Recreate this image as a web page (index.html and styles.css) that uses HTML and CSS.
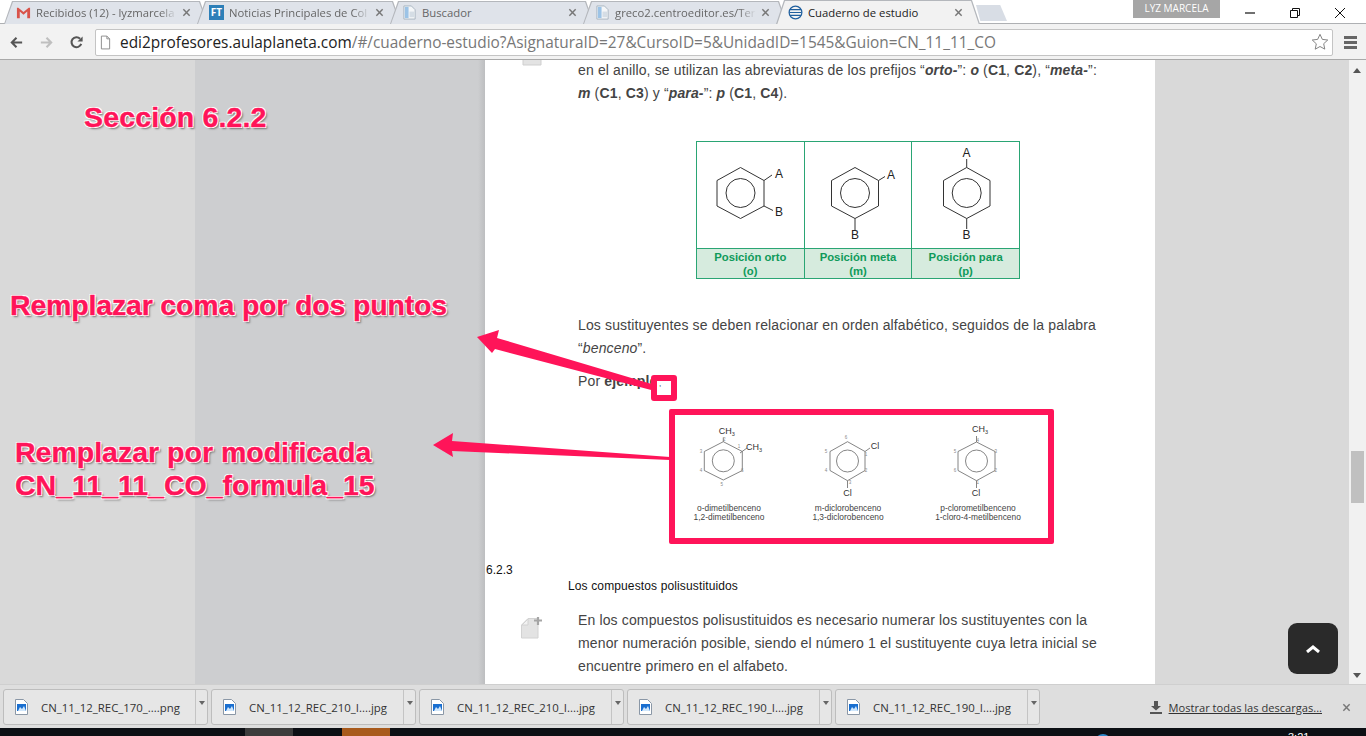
FILE: index.html
```html
<!DOCTYPE html>
<html lang="es">
<head>
  <meta charset="UTF-8" />
  <title>Cuaderno de estudio</title>
  <link rel="stylesheet" href="styles.css">
</head>
<body>
  <svg class="defs" width="0" height="0">
    <symbol id="page-ico" viewBox="0 0 16 16">
      <path d="M2 1h8l4 4v10H2z" fill="#f4f6f8" stroke="#a9b4c0"/>
      <path d="M3 2h4v12H3z" fill="#9cc3e6"/>
      <path d="M8 7h5v6H8z" fill="#d5dde5"/>
    </symbol>
    <symbol id="file-ico" viewBox="0 0 13 16">
      <path d="M.5 .5h8l4 4v11H.5z" fill="#fff" stroke="#8a97a6"/>
      <path d="M2 5h9v7H2z" fill="#1a6fd0"/>
      <path d="M3 12l2-4 2 2 2-3 2 5z" fill="#cfe6fb"/>
    </symbol>
    <symbol id="x-ico" viewBox="0 0 10 10">
      <path d="M1.500 1.500l7 7M8.500 1.500l-7 7" stroke="#777" stroke-width="1.600" fill="none"/>
    </symbol>
    <symbol id="caret" viewBox="0 0 6 4">
      <path d="M0 0h6L3 4z" fill="#666"/>
    </symbol>
  </svg>

  <header class="tabstrip">
    <div class="tab">
      <svg class="tab-ico" viewBox="0 0 16 16"><path d="M1 3v11h3V7l4 3.500L12 7v7h3V3h-1.500L8 7.500 2.500 3z" fill="#d9534a"/></svg>
      <span class="tab-title tab-fade">Recibidos (12) - lyzmarcela</span>
      <svg class="tab-x"><use href="#x-ico"/></svg>
    </div>
    <div class="tab">
      <span class="ft-ico">FT</span>
      <span class="tab-title tab-fade">Noticias Principales de Col</span>
      <svg class="tab-x"><use href="#x-ico"/></svg>
    </div>
    <div class="tab">
      <svg class="tab-ico"><use href="#page-ico"/></svg>
      <span class="tab-title">Buscador</span>
      <svg class="tab-x"><use href="#x-ico"/></svg>
    </div>
    <div class="tab">
      <svg class="tab-ico"><use href="#page-ico"/></svg>
      <span class="tab-title tab-fade">greco2.centroeditor.es/Ter</span>
      <svg class="tab-x"><use href="#x-ico"/></svg>
    </div>
    <div class="tab tab-active">
      <svg class="tab-ico" viewBox="0 0 16 16"><g fill="none" stroke="#1f5f9e" stroke-width="1.300"><circle cx="8" cy="8" r="6.800"/><path d="M2 5h12M1.500 8h13M2 11h12"/></g></svg>
      <span class="tab-title">Cuaderno de estudio</span>
      <svg class="tab-x"><use href="#x-ico"/></svg>
    </div>
    <div class="tab-new"></div>
    <div class="profile">LYZ MARCELA</div>
    <div class="win-btns">
      <svg class="win-btn" viewBox="0 0 12 12"><path d="M1 6h10" stroke="#111" stroke-width="1.200"/></svg>
      <svg class="win-btn" viewBox="0 0 12 12"><path d="M1.500 3.500h7v7h-7zM3.500 3.500v-2h7v7h-2" fill="none" stroke="#111"/></svg>
      <svg class="win-btn" viewBox="0 0 12 12"><path d="M1 1l10 10M11 1L1 11" stroke="#111"/></svg>
    </div>
  </header>

  <nav class="toolbar">
    <div class="nav-btns">
      <svg class="nav-ico" viewBox="0 0 16 16"><path d="M14 8H4M8 3L3 8l5 5" fill="none" stroke="#555" stroke-width="2.200"/></svg>
      <svg class="nav-ico" viewBox="0 0 16 16"><path d="M2 8h10M8 3l5 5-5 5" fill="none" stroke="#bfbfbf" stroke-width="2.200"/></svg>
      <svg class="nav-ico" viewBox="0 0 16 16"><path d="M13 9.500A5.300 5.300 0 1 1 11.800 4" fill="none" stroke="#555" stroke-width="2.200"/><path d="M14.500 1.500v5.500H9z" fill="#555"/></svg>
    </div>
    <div class="omnibox">
      <svg class="omni-ico" viewBox="0 0 12 16"><path d="M1.500 1h6l3 3v11h-9z" fill="#fff" stroke="#888"/><path d="M7.500 1v3h3" fill="none" stroke="#888"/></svg>
      <span class="url"><b>edi2profesores.aulaplaneta.com</b>/#/cuaderno-estudio?AsignaturaID=27&amp;CursoID=5&amp;UnidadID=1545&amp;Guion=CN_11_11_CO</span>
      <svg class="star" viewBox="0 0 20 20"><path d="M10 1.500l2.600 5.600 6 .7-4.500 4.100 1.200 6L10 15l-5.300 3 1.200-6L1.400 7.800l6-.7z" fill="#fff" stroke="#777"/></svg>
    </div>
    <div class="menu-ico"><i></i><i></i><i></i></div>
  </nav>

  <main class="viewport">
    <div class="side-left"></div>

    <article class="sheet">
      <svg class="note-ico note-top" viewBox="0 0 20 22"><path d="M1 7l6-6h12v20H1z" fill="#e3e3e3" stroke="#cfcfcf"/></svg>
      <p class="body-text">en el anillo, se utilizan las abreviaturas de los prefijos “<b><i>orto-</i></b>”: <b><i>o</i></b> (<b>C1</b>, <b>C2</b>), “<b><i>meta-</i></b>”:<br><b><i>m</i></b> (<b>C1</b>, <b>C3</b>) y “<b><i>para-</i></b>”: <b><i>p</i></b> (<b>C1</b>, <b>C4</b>).</p>

      <table class="pos-table">
        <tr>
          <td>
            <svg class="mol" viewBox="0 0 106 106" width="106" height="106">
              <path d="M43.500 25.500L67 38.500V64L43.500 76.500 20 64V38.500z"/><circle cx="43.500" cy="51" r="14.500"/>
              <path d="M67 38.500L75 33M67 64l9 4.500"/>
              <text x="82" y="35.500">A</text><text x="82" y="73.500">B</text>
            </svg>
          </td>
          <td>
            <svg class="mol" viewBox="0 0 106 106" width="106" height="106">
              <path d="M50 25.500L73.500 38.500V64L50 76.500 26.500 64V38.500z"/><circle cx="50" cy="51" r="14.500"/>
              <path d="M73.500 38.500L80 34.500M50 76.500V88"/>
              <text x="86" y="37">A</text><text x="50" y="97">B</text>
            </svg>
          </td>
          <td>
            <svg class="mol" viewBox="0 0 106 106" width="106" height="106">
              <path d="M54.700 25.500L78 38.500V64L54.700 76.500 31.500 64V38.500z"/><circle cx="54.700" cy="51" r="14.500"/>
              <path d="M54.700 25.500V17M54.700 76.500V87"/>
              <text x="54.500" y="15">A</text><text x="54.500" y="97">B</text>
            </svg>
          </td>
        </tr>
        <tr class="pos-labels">
          <td>Posición orto<br>(o)</td>
          <td>Posición meta<br>(m)</td>
          <td>Posición para<br>(p)</td>
        </tr>
      </table>

      <p class="body-text after-table">Los sustituyentes se deben relacionar en orden alfabético, seguidos de la palabra<br>“<i>benceno</i>”.</p>
      <p class="body-text por-ej">Por <b>ejemplo</b></p>

      <div class="formula-box">
        <figure class="formula">
          <svg class="mol-sm" viewBox="0 0 108 85" width="108" height="85">
            <path d="M48.300 26.700L67.300 36.500V55.500L48.300 65 29.300 55.500V36.500z"/><circle cx="48.300" cy="45.800" r="11"/>
            <path d="M48.300 26.700V22.500M65 38l7-5"/>
            <text x="51.700" y="19">CH<tspan class="sub" dy="2">3</tspan></text>
            <text x="79" y="34.700">CH<tspan class="sub" dy="2">3</tspan></text>
            <g class="num"><text x="49.300" y="25.800">2</text><text x="64" y="33">1</text><text x="26" y="37.500">3</text><text x="26" y="57">4</text><text x="46.700" y="70.800">5</text><text x="67.300" y="57">6</text></g>
          </svg>
          <figcaption>o-dimetilbenceno<br>1,2-dimetilbenceno</figcaption>
        </figure>
        <figure class="formula">
          <svg class="mol-sm" viewBox="0 0 130 85" width="130" height="85">
            <path d="M64.500 26.700L82 36.500V55.500L64.500 65.700 47 55.500V36.500z"/><circle cx="64.500" cy="46" r="11"/>
            <path d="M82 36.500L87 33M64.500 65.700V73"/>
            <text x="92" y="33.700">Cl</text><text x="64.500" y="80.700">Cl</text>
            <g class="num"><text x="63" y="24.200">6</text><text x="83" y="40.800">1</text><text x="83" y="57.200">2</text><text x="67" y="68.800">3</text><text x="43" y="57.200">4</text><text x="43" y="38.200">5</text></g>
          </svg>
          <figcaption>m-diclorobenceno<br>1,3-diclorobenceno</figcaption>
        </figure>
        <figure class="formula">
          <svg class="mol-sm" viewBox="0 0 130 85" width="130" height="85">
            <path d="M63.500 27L82 36.500V55.500L63.500 65.700 45 55.500V36.500z"/><circle cx="63.500" cy="46" r="11"/>
            <path d="M63.500 27V21M63.500 65.700V73"/>
            <text x="67" y="17">CH<tspan class="sub" dy="2">3</tspan></text>
            <text x="63" y="80.700">Cl</text>
            <g class="num"><text x="64.700" y="26.500">4</text><text x="82.700" y="37.500">3</text><text x="82.700" y="57.200">2</text><text x="64.700" y="68.800">1</text><text x="42" y="57.200">6</text><text x="42" y="37.500">5</text></g>
          </svg>
          <figcaption>p-clorometilbenceno<br>1-cloro-4-metilbenceno</figcaption>
        </figure>
      </div>

      <div class="sec-num">6.2.3</div>
      <div class="sec-title">Los compuestos polisustituidos</div>

      <div class="note-row">
        <svg class="note-ico" viewBox="0 0 22 22">
          <path d="M.5 8l6.500-6.500h10V21H.5z" fill="#e3e3e3" stroke="#d2d2d2"/>
          <path d="M1 8l6-6v6z" fill="#f2f2f2" stroke="#d2d2d2"/>
          <path d="M13 3.500h8M17 0v8" stroke="#a5a5a5" stroke-width="2.200"/>
        </svg>
        <p class="body-text">En los compuestos polisustituidos es necesario numerar los sustituyentes con la<br>menor numeración posible, siendo el número 1 el sustituyente cuya letra inicial se<br>encuentre primero en el alfabeto.</p>
      </div>
    </article>

    <div class="side-right">
      <button class="to-top"><svg viewBox="0 0 14 8" width="14" height="8"><path d="M1 7l6-5 6 5" fill="none" stroke="#fff" stroke-width="3"/></svg></button>
    </div>
    <div class="scrollbar">
      <div class="scroll-up"></div>
      <div class="scroll-thumb"></div>
      <div class="scroll-down"></div>
    </div>

    <!-- annotations drawn on top of the screenshot -->
    <div class="note note-a">Sección 6.2.2</div>
    <div class="note note-b">Remplazar coma por dos puntos</div>
    <div class="note note-c">Remplazar por modificada<br>CN_11_11_CO_formula_15</div>
    <svg class="arrows" viewBox="0 0 1366 624" width="1366" height="624">
      <path d="M477 277L499 270 497 278 655 325V331L495 289 492 293z"/>
      <path d="M433 385L453 373 452 381 670 397V400L452 391 453 397z"/>
    </svg>
    <div class="comma-mark">,</div>
  </main>

  <footer class="shelf">
    <div class="dl-item"><svg class="dl-ico"><use href="#file-ico"/></svg><span class="dl-name">CN_11_12_REC_170_....png</span><span class="dl-arrow"><svg width="6" height="4"><use href="#caret"/></svg></span></div>
    <div class="dl-item"><svg class="dl-ico"><use href="#file-ico"/></svg><span class="dl-name">CN_11_12_REC_210_I....jpg</span><span class="dl-arrow"><svg width="6" height="4"><use href="#caret"/></svg></span></div>
    <div class="dl-item"><svg class="dl-ico"><use href="#file-ico"/></svg><span class="dl-name">CN_11_12_REC_210_I....jpg</span><span class="dl-arrow"><svg width="6" height="4"><use href="#caret"/></svg></span></div>
    <div class="dl-item"><svg class="dl-ico"><use href="#file-ico"/></svg><span class="dl-name">CN_11_12_REC_190_I....jpg</span><span class="dl-arrow"><svg width="6" height="4"><use href="#caret"/></svg></span></div>
    <div class="dl-item"><svg class="dl-ico"><use href="#file-ico"/></svg><span class="dl-name">CN_11_12_REC_190_I....jpg</span><span class="dl-arrow"><svg width="6" height="4"><use href="#caret"/></svg></span></div>
    <div class="show-all">
      <svg width="14" height="14" viewBox="0 0 14 14"><path d="M5 1h4v5h3L7 10.500 2 6h3zM1 12h12v2H1z" fill="#555"/></svg>
      <a class="show-link">Mostrar todas las descargas...</a>
      <svg class="shelf-x"><use href="#x-ico"/></svg>
    </div>
  </footer>

  <div class="taskbar">
    <i class="task-gray"></i><i class="task-orange"></i><i class="task-blue"></i>
    <span class="task-time">3:21</span>
  </div>
</body>
</html>
```

FILE: styles.css
```css
* { margin: 0; padding: 0; box-sizing: border-box; }
html, body {
  width: 1366px; height: 736px;
  overflow: hidden;
  font-family: 'Liberation Sans', Arial, sans-serif;
  background: #0c0f14;
}
body { display: flex; flex-direction: column; }
.defs { position: absolute; }

/* browser chrome */
.tabstrip {
  height: 24px;
  flex: none;
  display: flex;
  align-items: flex-end;
  padding-left: 4px;
  background: #fff;
  font-family: 'Open Sans', sans-serif;
  box-shadow: inset 0 -1px 0 #aeb0b3;
}
.tab {
  position: relative;
  isolation: isolate;
  width: 204px;
  height: 23px;
  flex: none;
  display: flex;
  align-items: center;
  gap: 5px;
  padding: 0 17px 0 12px;
  margin-right: -11px;
  font-size: 11.3px;
  color: #666;
}
.tab::before, .tab::after {
  content: "";
  position: absolute;
  z-index: -1;
  clip-path: polygon(0 100%, 8px 0, calc(100% - 8px) 0, 100% 100%);
}
.tab::before { inset: 0; background: #b4b7bc; }
.tab::after { inset: 1px 1px 0 1px; background: #dfe3ea; }
.tab-active { color: #222; height: 24px; z-index: 2; }
.tab-active::after { background: #f2f2f2; inset: 1px 1px -1px 1px; }
.tab-ico { width: 15px; height: 15px; flex: none; }
.ft-ico {
  width: 15px; height: 15px; flex: none;
  background: #2d7fb8;
  color: #fff;
  font-size: 10px;
  font-weight: bold;
  text-align: center;
  line-height: 15px;
}
.tab-title { flex: 1; white-space: nowrap; }
.tab-fade { -webkit-mask-image: linear-gradient(90deg, #000 88%, transparent 100%); mask-image: linear-gradient(90deg, #000 88%, transparent 100%); }
.tab-x { width: 9px; height: 9px; flex: none; }
.tab-new {
  width: 31px; height: 16px;
  margin: 0 0 3px 7px;
  background: #d8dde5;
  clip-path: polygon(0 0, 78% 0, 100% 100%, 14% 100%);
}
.profile {
  align-self: flex-start;
  width: 87px; height: 18px;
  margin-left: 126px;
  background: #a6a6a6;
  color: #fff;
  font-size: 10px;
  line-height: 17px;
  text-align: center;
}
.win-btns { align-self: flex-start; display: flex; gap: 33px; padding: 7px 0 0 24px; }
.win-btn { width: 12px; height: 12px; }

.toolbar {
  height: 36px;
  flex: none;
  display: flex;
  align-items: center;
  gap: 11px;
  padding: 1px 0 0 9px;
  background: #f2f2f2;
  border-bottom: 1px solid #a9a9a9;
}
.nav-btns { display: flex; gap: 15px; }
.nav-ico { width: 15px; height: 15px; flex: none; }
.omnibox {
  width: 1238px;
  height: 27px;
  display: flex;
  align-items: center;
  gap: 9px;
  padding: 0 3px 0 4px;
  background: #fff;
  border: 1px solid #c4c4c4;
  border-radius: 2px;
}
.omni-ico { width: 11px; height: 15px; flex: none; }
.url { flex: 1; font-family: 'Open Sans', sans-serif; font-size: 15.4px; color: #777; white-space: nowrap; overflow: hidden; }
.url b { font-weight: normal; color: #222; }
.star { width: 18px; height: 18px; flex: none; }
.menu-ico { width: 13px; display: flex; flex-direction: column; gap: 2px; }
.menu-ico i { height: 3px; background: #666; }

/* page */
.viewport {
  position: relative;
  height: 624px;
  flex: none;
  display: flex;
  overflow: hidden;
}
.side-left {
  width: 485px;
  flex: none;
  background: linear-gradient(90deg, #d9d9d9 195px, #cdced0 195px, #cdced0 478px, #bdbec0 485px);
}
.sheet {
  width: 670px;
  flex: none;
  position: relative;
  background: #fff;
  color: #444;
}
.body-text {
  font-size: 14px;
  line-height: 23px;
  letter-spacing: .14px;
  color: #444;
}
.sheet > .body-text { padding-left: 93px; }
.sheet > .body-text:first-of-type { margin-top: -1px; }
.note-ico { width: 22px; height: 22px; flex: none; }
.note-top { position: absolute; left: 36px; top: -16px; }

.pos-table {
  width: 324px;
  height: 138px;
  margin: 36px 0 0 211px;
  border-collapse: collapse;
}
.pos-table td { width: 108px; border: 1px solid #2aa574; text-align: center; padding: 0; vertical-align: top; }
.pos-table .pos-labels td {
  height: 30px;
  vertical-align: middle;
  background: #d6ebde;
  color: #0f9a5a;
  font-size: 11.3px;
  font-weight: bold;
  line-height: 14px;
}
.mol { display: block; overflow: visible; }
.mol path, .mol circle { fill: none; stroke: #333; stroke-width: 1; }
.mol text { font-size: 12px; fill: #222; text-anchor: middle; }

.after-table { margin-top: 35px; }
.por-ej { margin-top: 10px; }

.formula-box {
  width: 385px;
  height: 135px;
  margin: 16px 0 0 184px;
  display: grid;
  grid-template-columns: 108px 130px 130px;
  border: 6px solid #ff1459;
  border-radius: 2px;
}
.formula { text-align: center; }
.mol-sm { display: block; overflow: visible; }
.mol-sm path, .mol-sm circle { fill: none; stroke: #666; stroke-width: .8; }
.mol-sm text { font-size: 9px; fill: #333; text-anchor: middle; }
.mol-sm .sub { font-size: 5.5px; }
.mol-sm .num text { font-size: 4.5px; fill: #888; }
.formula figcaption { margin-top: 4px; font-size: 8.4px; line-height: 9px; color: #444; white-space: nowrap; }

.sec-num { margin-top: 19px; font-size: 12px; line-height: 14px; color: #111; padding-left: 1px; }
.sec-title { margin-top: 2px; padding-left: 83px; font-size: 12px; line-height: 14px; letter-spacing: .13px; color: #111; }
.note-row { display: flex; gap: 35px; padding: 16px 0 0 36px; }
.note-row .note-ico { margin-top: 8px; }

.side-right { flex: 1; position: relative; background: #d9d9d9; }
.to-top {
  position: absolute;
  right: 11px; bottom: 10px;
  width: 50px; height: 51px;
  background: #2a2a2a;
  border: 0;
  border-radius: 9px;
  display: flex;
  align-items: center;
  justify-content: center;
}
.scrollbar {
  width: 17px;
  flex: none;
  position: relative;
  background: #f1f1f1;
}
.scroll-up { height: 17px; }
.scroll-up::before {
  content: "";
  position: absolute;
  top: 8px; left: 4px;
  border: 4px solid transparent;
  border-bottom: 5px solid #555;
  border-top: 0;
}
.scroll-thumb { width: 13px; height: 52px; margin: 374px 0 0 2px; background: #c0c0c0; }
.scroll-down {
  position: absolute;
  bottom: 6px; left: 4px;
  border: 4px solid transparent;
  border-top: 5px solid #555;
  border-bottom: 0;
}

/* annotations */
.note {
  position: absolute;
  font-size: 28.5px;
  line-height: 33px;
  font-weight: bold;
  color: #ff1459;
  white-space: nowrap;
  -webkit-text-stroke: .4px #ff1459;
  text-shadow: -1px -1px 0 #fff, 1px -1px 0 #fff, -1px 1px 0 #fff, 1px 1px 0 #fff, 2px 2px 2px #777;
}
.note-a { left: 84px; top: 41px; letter-spacing: .15px; }
.note-b { left: 10px; top: 229px; letter-spacing: -.17px; }
.note-c { left: 15px; top: 376px; }
.arrows { position: absolute; left: 0; top: 0; pointer-events: none; }
.arrows path { fill: #ff1459; }
.comma-mark {
  position: absolute;
  left: 651px; top: 315px;
  width: 26px; height: 26px;
  padding-left: 2px;
  background: #fff;
  border: 6px solid #ff1459;
  border-radius: 3px;
  font-size: 8px;
  line-height: 6px;
  color: #222;
}

/* downloads */
.shelf {
  height: 44px;
  flex: none;
  display: flex;
  align-items: flex-start;
  gap: 3px;
  padding: 4px 15px 0 3px;
  background: #dedede;
  border-top: 1px solid #cfcfcf;
}
.dl-item {
  width: 205px;
  height: 36px;
  flex: none;
  display: flex;
  align-items: center;
  background: #e6e6e6;
  border: 1px solid #bdbdbd;
  border-radius: 3px;
  padding-left: 11px;
  font-family: 'Open Sans', sans-serif;
  font-size: 11.4px;
  color: #333;
}
.dl-ico { width: 13px; height: 16px; flex: none; }
.dl-name { flex: 1; padding-left: 13px; white-space: nowrap; overflow: hidden; }
.dl-arrow {
  width: 12px; height: 100%;
  flex: none;
  display: flex;
  justify-content: center;
  padding-top: 11px;
  border-left: 1px solid #c4c4c4;
}
.dl-arrow svg { display: block; }
.show-all {
  flex: 1;
  height: 36px;
  display: flex;
  align-items: center;
  justify-content: flex-end;
  gap: 6px;
  font-family: 'Open Sans', sans-serif;
  font-size: 11.1px;
}
.show-link { color: #333; text-decoration: underline; }
.shelf-x { width: 9px; height: 9px; margin-left: 14px; }

.taskbar { height: 8px; flex: none; position: relative; overflow: hidden; background: #0c0f14; }
.task-gray { position: absolute; left: 245px; top: 0; width: 48px; height: 8px; background: #3c3c3c; }
.task-orange { position: absolute; left: 342px; top: 0; width: 48px; height: 8px; background: #a85a1c; }
.task-blue { position: absolute; left: 1095px; top: 6px; width: 16px; height: 16px; border-radius: 50%; background: #2a86c8; }
.task-time { position: absolute; left: 1288px; top: 3px; font-size: 11px; color: #fff; }
```
